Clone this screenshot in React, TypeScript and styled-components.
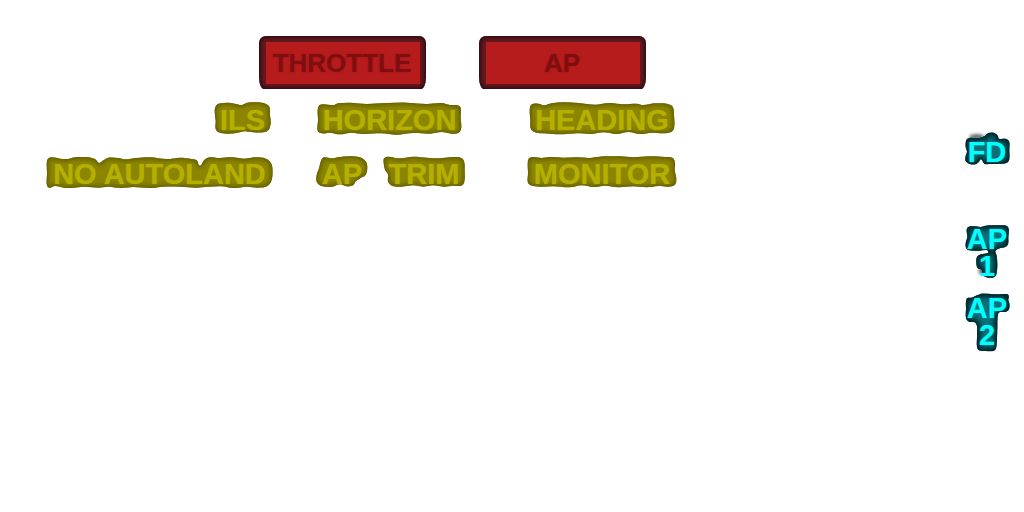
import React, { useId } from "react";
import styled, { createGlobalStyle } from "styled-components";

const GlobalStyle = createGlobalStyle`
  *, *::before, *::after { box-sizing: border-box; }
  body {
    margin: 0;
    background: #ffffff;
    font-family: "Liberation Sans", Arial, sans-serif;
    font-weight: 700;
  }
`;

const Panel = styled.main`
  display: flex;
  justify-content: space-between;
  align-items: flex-start;
  min-height: 100vh;
  padding: 36px 14px 36px 46px;
`;

const Annunciators = styled.section`
  display: flex;
  flex-direction: column;
`;

const WarningRow = styled.div`
  display: flex;
  gap: 53px;
  padding-left: 213px;
`;

const Warning = styled.div`
  width: 167px;
  height: 53px;
  padding: 6px 6px 5px 7px;
  border-radius: 7px 7px 5px 5px / 7px 7px 12px 12px;
  background: #651a20;
  box-shadow: inset 0 0 5px 1px #1c0709;
`;

const WarningFace = styled.div`
  display: flex;
  align-items: center;
  justify-content: center;
  height: 100%;
  padding-right: 2px;
  background: #b71c1c;
  color: #7f0e11;
  font-size: 26px;
  line-height: 30px;
  text-shadow: 0 0 2px #9c1516;
`;

const CautionGrid = styled.div`
  display: grid;
  grid-template-columns: 227px 149px 150px;
  column-gap: 43px;
  row-gap: 21px;
  padding-top: 13px;
`;

const Cell = styled.div<{ $align?: string; $inset?: number }>`
  display: flex;
  align-items: flex-start;
  justify-content: ${(p) => p.$align ?? "flex-start"};
  padding: 0 ${(p) => p.$inset ?? 0}px;
  gap: 15px;
  &:nth-child(3n) {
    margin-left: 19px;
    margin-right: -19px;
  }
`;

const Modes = styled.aside`
  display: flex;
  flex-direction: column;
  padding-top: 96px;
`;

const ModeGroup = styled.div`
  display: flex;
  flex-direction: column;
  gap: 14px;
  padding-top: 58px;
`;

const Plate = styled.div<{ $width: number; $height: number; $tone: "caution" | "mode"; $stacked: boolean }>`
  position: relative;
  display: flex;
  align-items: flex-start;
  justify-content: center;
  width: ${(p) => p.$width}px;
  height: ${(p) => p.$height}px;
  padding-top: ${(p) => (p.$stacked ? 2 : p.$tone === "mode" ? 6 : 4)}px;
  color: ${(p) => (p.$tone === "caution" ? "#b5b000" : "#00ffff")};
  font-size: 29px;
  line-height: ${(p) => (p.$stacked ? 27 : 28)}px;
  text-align: center;
  text-shadow: 0 0 1px ${(p) => (p.$tone === "caution" ? "#a39e00" : "#00a8ae")};
  white-space: nowrap;
`;

const Backing = styled.svg`
  position: absolute;
  inset: 0;
  width: 100%;
  height: 100%;
  overflow: visible;
`;

const Caption = styled.span`
  position: relative;
`;

const Line = styled.span`
  display: block;
`;

type Point = [number, number];

/* Closed curve that runs smoothly through every point. */
function smooth(points: Point[]): string {
  const n = points.length;
  let d = `M${points[0][0]} ${points[0][1]}`;
  for (let i = 0; i < n; i++) {
    const a = points[(i + n - 1) % n];
    const b = points[i];
    const c = points[(i + 1) % n];
    const e = points[(i + 2) % n];
    const len = Math.hypot(c[0] - b[0], c[1] - b[1]);
    const handle = (p: Point, q: Point): Point => {
      const l = Math.hypot(q[0] - p[0], q[1] - p[1]) || 1;
      return [((q[0] - p[0]) / l) * len * 0.33, ((q[1] - p[1]) / l) * len * 0.33];
    };
    const h1 = handle(a, c);
    const h2 = handle(b, e);
    d += `C${b[0] + h1[0]} ${b[1] + h1[1]} ${c[0] - h2[0]} ${c[1] - h2[1]} ${c[0]} ${c[1]}`;
  }
  return d + "Z";
}

interface BlobProps {
  view: [number, number, number, number];
  points: Point[];
  tone?: "caution" | "mode";
  lines: string[];
  smudge?: [number, number, number, number];
}

const tones = {
  caution: { fill: "#8c8500", edge: "#5a5400", width: 10, blur: 6, soft: 1.3 },
  mode: { fill: "#087078", edge: "#002226", width: 20, blur: 8, soft: 2 },
};

function Blob({ view, points, tone = "caution", lines, smudge }: BlobProps) {
  const id = useId().replace(/[^a-zA-Z0-9]/g, "");
  const d = smooth(points);
  const c = tones[tone];
  return (
    <Plate $width={view[2] / 3} $height={view[3] / 3} $tone={tone} $stacked={lines.length > 1}>
      <Backing viewBox={view.join(" ")} aria-hidden="true">
        <defs>
          <clipPath id={`c${id}`}>
            <path d={d} />
          </clipPath>
          <filter id={`f${id}`} x="-20%" y="-30%" width="140%" height="160%">
            <feGaussianBlur stdDeviation={c.blur} />
          </filter>
          <filter id={`e${id}`} x="-10%" y="-10%" width="120%" height="120%">
            <feGaussianBlur stdDeviation={c.soft} />
          </filter>
          <filter id={`s${id}`} x="-60%" y="-120%" width="220%" height="340%">
            <feGaussianBlur stdDeviation="5" />
          </filter>
        </defs>
        {smudge && (
          <ellipse
            cx={smudge[0]}
            cy={smudge[1]}
            rx={smudge[2]}
            ry={smudge[3]}
            fill="#333b3c"
            opacity="0.75"
            filter={`url(#s${id})`}
          />
        )}
        <g filter={`url(#e${id})`}>
          <path d={d} fill={c.fill} />
          <g clipPath={`url(#c${id})`}>
            <path d={d} fill="none" stroke={c.edge} strokeWidth={c.width} filter={`url(#f${id})`} />
            <path d={d} fill="none" stroke={c.edge} strokeWidth="3" opacity="0.5" />
          </g>
        </g>
      </Backing>
      <Caption>
        {lines.map((l) => (
          <Line key={l}>{l}</Line>
        ))}
      </Caption>
    </Plate>
  );
}

const ils: Point[] = [
  [44, 42], [50, 27], [62, 22], [85, 20], [108, 24], [124, 27], [142, 20], [175, 19], [196, 23],
  [208, 32], [210, 58], [212, 82], [205, 103], [190, 109], [160, 109], [135, 106], [110, 111],
  [80, 113], [56, 109], [47, 99], [47, 75],
];
const horizon: Point[] = [
  [353, 45], [358, 31], [372, 28], [400, 31], [414, 25], [450, 23], [500, 27], [560, 24],
  [620, 23], [680, 27], [725, 24], [750, 30], [772, 31], [782, 38], [782, 70], [784, 98],
  [776, 113], [755, 116], [725, 111], [690, 116], [640, 114], [590, 119], [545, 115],
  [490, 117], [455, 113], [420, 118], [390, 113], [365, 115], [353, 107], [354, 75],
];
const heading: Point[] = [
  [89, 45], [94, 29], [115, 26], [133, 31], [155, 25], [190, 22], [235, 24], [285, 29],
  [330, 24], [370, 28], [410, 26], [430, 30], [465, 25], [500, 26], [518, 35], [522, 60],
  [523, 95], [515, 110], [490, 115], [455, 113], [420, 117], [385, 111], [350, 117],
  [310, 112], [275, 117], [230, 115], [190, 118], [150, 116], [110, 113], [93, 103], [91, 75],
];
const autoland: Point[] = [
  [50, 55], [54, 41], [67, 37], [90, 41], [115, 42], [135, 37], [175, 37], [196, 43],
  [207, 54], [220, 46], [235, 38], [265, 39], [285, 43], [320, 39], [360, 37], [410, 42],
  [450, 38], [485, 42], [500, 46], [510, 62], [522, 46], [538, 37], [570, 39], [605, 37],
  [645, 41], [675, 37], [708, 41], [724, 56], [728, 80], [724, 108], [711, 124], [685, 128],
  [650, 125], [610, 129], [575, 124], [535, 125], [500, 128], [450, 125], [400, 125],
  [360, 129], [310, 126], [275, 129], [235, 125], [205, 128], [165, 125], [110, 129],
  [75, 123], [57, 128], [50, 116], [51, 85],
];
const ap: Point[] = [
  [357, 220], [364, 195], [372, 187], [395, 190], [420, 186], [450, 184], [480, 187],
  [498, 200], [502, 220], [496, 241], [482, 249], [468, 258], [459, 271], [440, 274],
  [420, 268], [397, 275], [365, 273], [350, 260], [350, 240],
];
const trim: Point[] = [
  [551, 205], [552, 190], [565, 185], [595, 190], [640, 185], [680, 188], [720, 190],
  [750, 187], [782, 188], [792, 198], [794, 225], [793, 260], [784, 272], [760, 272],
  [730, 275], [700, 271], [670, 275], [640, 271], [605, 275], [575, 272], [564, 259],
  [564, 238], [555, 224],
];
const monitor: Point[] = [
  [83, 205], [87, 190], [100, 186], [125, 189], [150, 186], [190, 188], [230, 187],
  [270, 189], [315, 184], [360, 184], [400, 187], [450, 184], [495, 186], [518, 189],
  [525, 203], [524, 225], [529, 250], [525, 269], [505, 275], [475, 273], [440, 277],
  [400, 274], [355, 277], [315, 272], [280, 276], [245, 271], [210, 277], [160, 274],
  [120, 275], [92, 271], [83, 261], [84, 235],
];
const fd: Point[] = [
  [67, 60], [76, 54], [106, 54], [121, 49], [133, 39], [149, 38], [160, 46], [165, 56],
  [187, 57], [196, 66], [196, 90], [196, 118], [188, 129], [165, 131], [140, 132],
  [121, 131], [111, 118], [105, 125], [94, 133], [77, 132], [65, 123], [65, 108],
  [69, 95], [65, 80],
];
const ap1: Point[] = [
  [68, 45], [73, 36], [90, 34], [110, 36], [125, 32], [160, 31], [187, 32], [194, 41],
  [193, 65], [192, 88], [184, 96], [162, 101], [154, 109], [158, 122], [160, 150],
  [157, 178], [150, 187], [127, 187], [115, 178], [113, 165], [101, 159], [97, 144],
  [99, 126], [111, 118], [132, 114], [130, 106], [105, 107], [76, 106], [66, 98],
  [65, 84], [70, 66],
];
const ap2: Point[] = [
  [68, 251], [83, 248], [99, 241], [112, 236], [150, 238], [188, 237], [194, 242],
  [193, 256], [197, 269], [193, 286], [181, 291], [166, 292], [161, 303], [160, 335],
  [159, 370], [156, 400], [148, 408], [124, 408], [105, 406], [99, 395], [99, 365],
  [99, 334], [92, 322], [75, 320], [66, 310], [66, 282],
];

export default function App() {
  return (
    <>
      <GlobalStyle />
      <Panel>
        <Annunciators>
          <WarningRow>
            <Warning>
              <WarningFace>THROTTLE</WarningFace>
            </Warning>
            <Warning>
              <WarningFace>AP</WarningFace>
            </Warning>
          </WarningRow>
          <CautionGrid>
            <Cell $align="flex-end" $inset={2}>
              <Blob view={[42, 18, 171, 96]} points={ils} lines={["ILS"]} />
            </Cell>
            <Cell $inset={1}>
              <Blob view={[351, 21, 435, 99]} points={horizon} lines={["HORIZON"]} />
            </Cell>
            <Cell $inset={2}>
              <Blob view={[87, 21, 438, 99]} points={heading} lines={["HEADING"]} />
            </Cell>
            <Cell>
              <Blob view={[48, 33, 681, 99]} points={autoland} lines={["NO AUTOLAND"]} />
            </Cell>
            <Cell>
              <Blob view={[348, 183, 156, 96]} points={ap} lines={["AP"]} />
              <Blob view={[549, 183, 246, 96]} points={trim} lines={["TRIM"]} />
            </Cell>
            <Cell>
              <Blob view={[81, 183, 450, 96]} points={monitor} lines={["MONITOR"]} />
            </Cell>
          </CautionGrid>
        </Annunciators>
        <Modes>
          <Blob view={[60, 36, 138, 102]} points={fd} tone="mode" lines={["FD"]} smudge={[98, 50, 22, 8]} />
          <ModeGroup>
            <Blob view={[60, 27, 138, 165]} points={ap1} tone="mode" lines={["AP", "1"]} smudge={[112, 168, 8, 10]} />
            <Blob view={[60, 234, 138, 177]} points={ap2} tone="mode" lines={["AP", "2"]} />
          </ModeGroup>
        </Modes>
      </Panel>
    </>
  );
}
